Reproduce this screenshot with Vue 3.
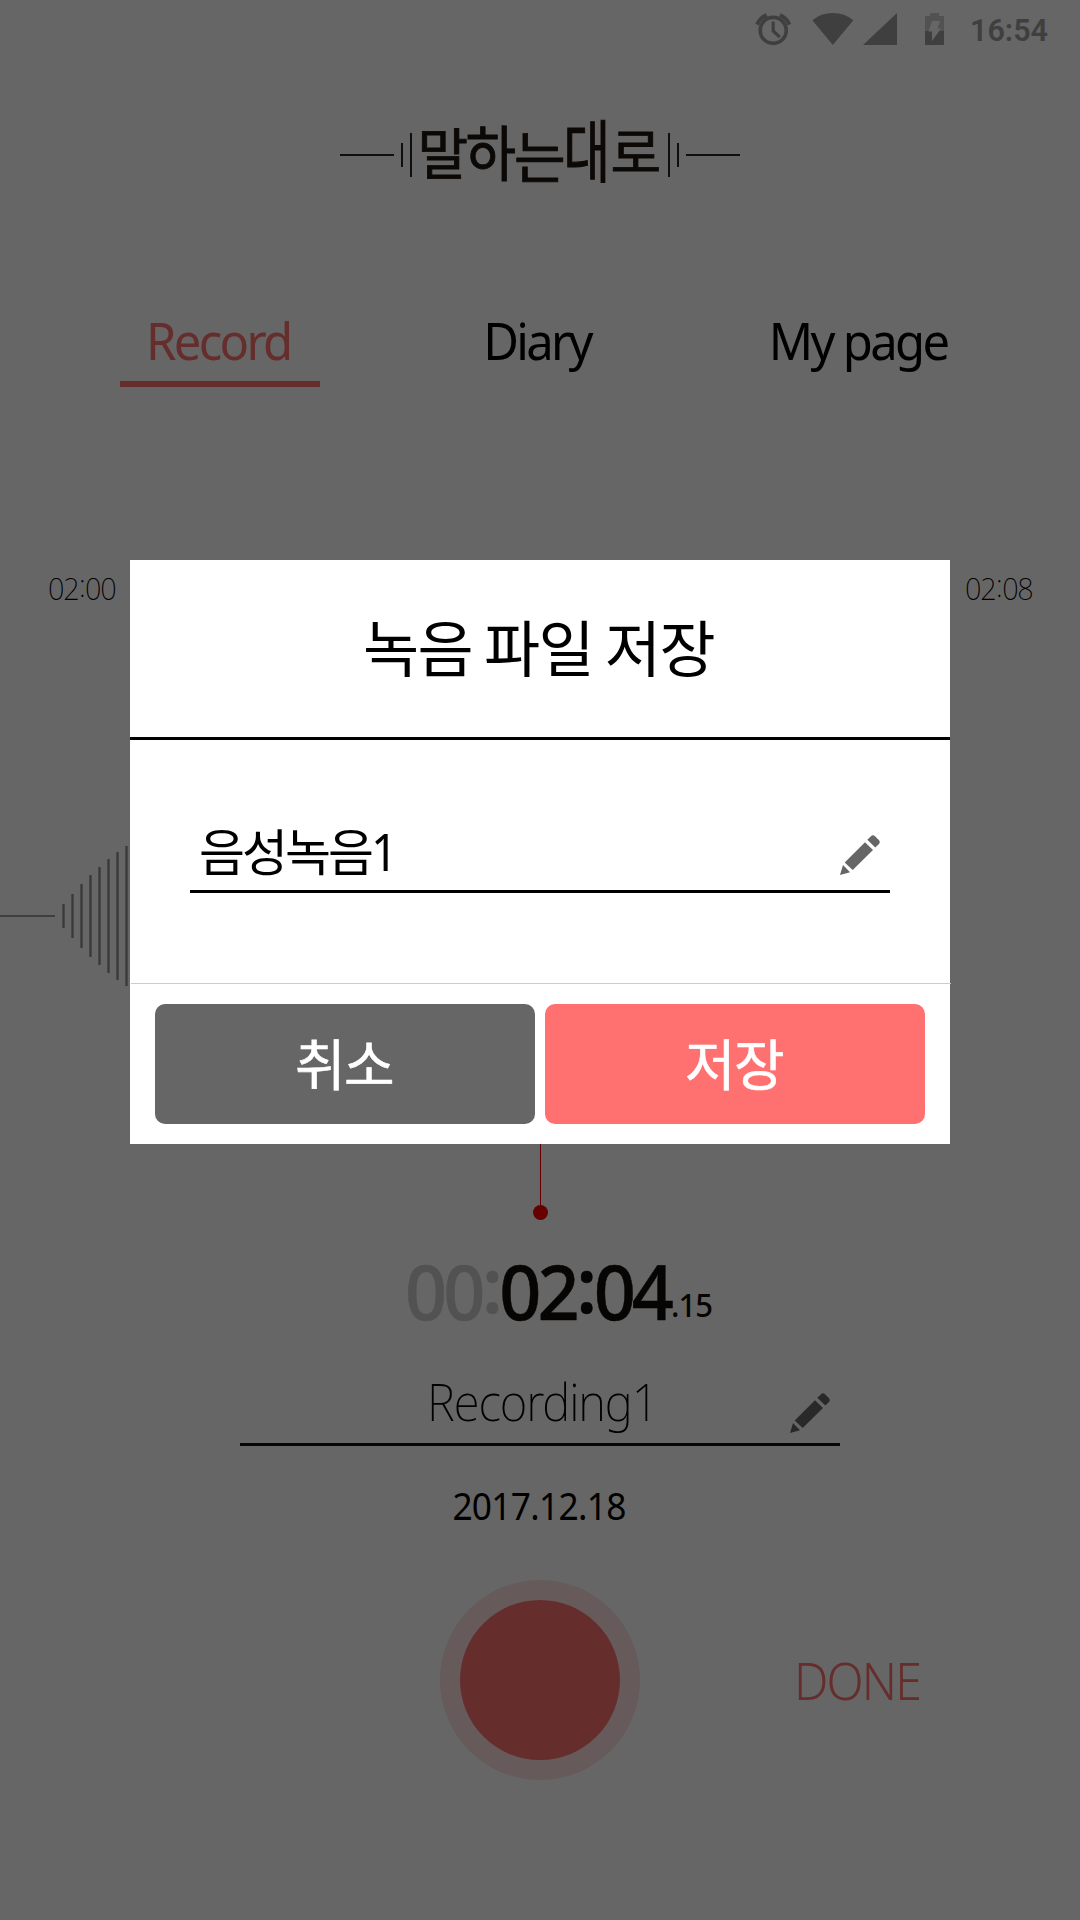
<script setup>
const tabs = [
  { label: 'Record', cls: 'record', active: true },
  { label: 'Diary', cls: 'diary', active: false },
  { label: 'My page', cls: 'mypage', active: false },
]
const bars = [24, 44, 64, 82, 98, 114, 128, 140]
const brand = [
  { ch: '말', cls: 'g1' },
  { ch: '하', cls: 'g2' },
  { ch: '는', cls: 'g3' },
  { ch: '대', cls: 'g4' },
  { ch: '로', cls: 'g5' },
]
</script>

<template>
  <div class="screen">
    <main class="page">
      <header class="status">
        <svg class="icons" width="200" height="60" viewBox="750 0 200 60">
          <g fill="none" stroke="#9e9e9e">
            <circle cx="773.2" cy="30.4" r="13" stroke-width="3.6" />
            <path d="M773.2 21.500V31l6.600 6.200" stroke-width="3.2" />
            <path d="M757.2 24.600Q760 18 766.600 15M789.400 24.600Q786.600 18 780 15" stroke-width="4" />
          </g>
          <path d="M812.3 20.300Q821 13 832.800 13T853.300 20.300L832.800 45z" fill="#9e9e9e" />
          <path d="M897 13v32h-34z" fill="#9e9e9e" />
          <path d="M930 13h9v3h5v15h-19V16h5z" fill="#cdcdcd" />
          <path d="M925 31h19v14h-19z" fill="#9e9e9e" />
          <path d="M932 21h8l-2.500 7.500h3.500L932 41v-9.500h-3.500z" fill="#fff" />
        </svg>
        <span class="clock">16:54</span>
      </header>

      <div class="brand">
        <i class="dash"></i><i class="tick short"></i><i class="tick tall"></i>
        <h1><span v-for="g in brand" :key="g.ch" :class="g.cls">{{ g.ch }}</span></h1>
        <i class="tick tall"></i><i class="tick short"></i><i class="dash"></i>
      </div>

      <nav class="tabs">
        <a v-for="t in tabs" :key="t.label" :class="['tab', { active: t.active }]"><span :class="t.cls">{{ t.label }}</span></a>
      </nav>

      <div class="times"><span>02<em>:</em>00</span><span>02<em>:</em>08</span></div>

      <div class="wave">
        <i class="base"></i>
        <i v-for="h in bars" :key="h" class="bar" :style="{ height: h + 'px' }"></i>
      </div>

      <div class="playhead"><i class="stem"></i><i class="dot"></i></div>

      <div class="timer"><span class="dim">00<em>:</em></span><span class="now">02<em>:</em>04</span><span class="frac">.15</span></div>

      <div class="name">
        <span class="name-text">Recording1</span>
        <svg class="pencil" width="40" height="40" viewBox="0 0 40 40" fill="#666">
          <path d="M27.300 4.800 31 1.200Q33 -.6 35 1.200L38.800 5Q40.600 7 39 9L35.300 12.600zM25 7.200l8 7.800-20.300 20L4.700 27.500zM3 30l7 7.200L0 40z" />
        </svg>
      </div>
      <div class="date">2017.12.18</div>

      <div class="controls">
        <button class="rec"><i></i></button>
        <span class="done">DONE</span>
      </div>
    </main>

    <div class="overlay">
      <section class="modal">
        <h2><span>녹음 파일 저장</span></h2>
        <div class="body">
          <div class="field">
            <span class="value">음성녹음<b>1</b></span>
            <svg class="pencil" width="40" height="40" viewBox="0 0 40 40" fill="#666">
              <path d="M27.300 4.800 31 1.200Q33 -.6 35 1.200L38.800 5Q40.600 7 39 9L35.300 12.600zM25 7.200l8 7.800-20.300 20L4.700 27.500zM3 30l7 7.200L0 40z" />
            </svg>
          </div>
        </div>
        <footer>
          <button class="btn cancel">취소</button>
          <button class="btn save">저장</button>
        </footer>
      </section>
    </div>
  </div>
</template>

<style>
body { margin: 0; background: #666; }
</style>

<style scoped>
* { box-sizing: border-box; }
i { display: block; flex: none; }
em { position: relative; font-style: normal; }
button { border: 0; padding: 0; font: inherit; }
.screen {
  position: relative;
  width: 1080px;
  height: 1920px;
  overflow: hidden;
  background: #fff;
  color: #000;
  font-family: "Noto Sans", "Noto Sans CJK KR", sans-serif;
}
.page { display: flex; flex-direction: column; height: 1920px; }
.status { display: flex; justify-content: flex-end; height: 60px; padding-right: 32px; }
.icons { margin-right: 20px; flex: none; }
.clock {
  width: 78px;
  font: 600 30.500px/61px Roboto, sans-serif;
  color: #9e9e9e;
  white-space: nowrap;
}
.brand {
  display: flex;
  align-items: center;
  justify-content: center;
  height: 70px;
  margin-top: 60px;
  color: #1c140e;
}
.dash { width: 54px; height: 2px; background: #2c2424; }
.tick { width: 2px; background: #2c2424; }
.short { height: 24px; }
.tall { height: 44px; }
.dash + .short { margin-left: 7px; }
.short + .tall { margin-left: 7px; }
.tall + .short { margin-left: 7px; }
.short + .dash { margin-left: 7px; }
h1 {
  display: flex;
  width: 256px;
  margin: 0;
  padding-left: 7px;
  font-size: 54px;
  line-height: 70px;
  font-weight: 400;
  -webkit-text-stroke: .8px #1c140e;
}
h1 span { display: block; width: 48px; flex: none; transform-origin: 50% 50%; }
.g1 { transform: translate(-1px, -2px) scale(1.02, 1.02); }
.g2 { transform: translate(-1px, -3px) scale(1.02, 1.12); }
.g3 { transform: translate(0, 1px) scale(1.04, 1.04); }
.g4 { transform: translate(-1px, -4px) scale(.94, 1.26); }
.g5 { transform: translate(0, -3px) scale(1.02, .98); }
.tabs { display: flex; justify-content: space-between; padding: 0 120px; margin-top: 120px; }
.tab {
  width: 200px;
  height: 77px;
  display: flex;
  justify-content: center;
  font-size: 51px;
  line-height: 60px;
  letter-spacing: -2.800px;
  white-space: nowrap;
}
.tab span { transform: translateX(-2px) scaleX(.96); }
.tab .diary { transform: translateX(-3px) scaleX(.96); }
.tab.active { color: #ff7070; border-bottom: 6px solid #ff7070; }
.times {
  display: flex;
  justify-content: space-between;
  height: 40px;
  margin-top: 181px;
  padding: 0 48px;
  font-size: 31px;
  font-weight: 200;
  line-height: 41px;
  letter-spacing: -1.400px;
}
.times span { transform: scaleX(.93); transform-origin: 0 50%; }
.times span:last-child { transform-origin: 100% 50%; }
.times em { top: -3px; padding: 0 .8px; }
.wave { display: flex; align-items: center; height: 140px; margin-top: 238px; }
.base { width: 55px; height: 2px; background: #9e9e9e; }
.bar { width: 3px; margin-left: 6px; background: linear-gradient(90deg, #b4b4b4 1px, #909090 1px, #909090 2px, #b4b4b4 2px); }
.base + .bar { margin-left: 7px; }
.playhead { display: flex; flex-direction: column; align-items: center; margin-top: 119px; padding-left: 1px; }
.stem { width: 1px; height: 100px; background: #f00; }
.dot { width: 15px; height: 15px; border-radius: 50%; background: #f00; }
.timer {
  display: flex;
  width: 400px;
  height: 80px;
  margin: 30px 0 0 405px;
  font-size: 76px;
  font-weight: 500;
  line-height: 81px;
  letter-spacing: -4.100px;
  color: #0f0d0b;
  -webkit-text-stroke: .5px;
  transform: scaleX(.97);
  transform-origin: 0 50%;
}
.timer em { top: -7px; padding: 0 .8px; font-weight: 600; }
.dim { color: #cdcdcd; }
.frac { font-size: 32px; line-height: 109px; letter-spacing: -1px; -webkit-text-stroke: 0; padding-left: 1px; }
.name {
  display: flex;
  width: 600px;
  height: 76px;
  margin: 40px 0 0 240px;
  border-bottom: 3px solid #0d0d0d;
}
.name-text { width: 362px; margin: 0 1px 0 187px; font-size: 51px; font-weight: 200; line-height: 63px; letter-spacing: -1.200px; transform: scaleX(.93); transform-origin: 0 50%; }
.name .pencil { margin-top: 23px; }
.date { margin-top: 34px; text-align: center; font-size: 38px; line-height: 50px; letter-spacing: -.8px; transform: translateX(-1px) scaleX(.93); }
.controls { display: flex; align-items: center; height: 200px; margin-top: 50px; padding-left: 440px; }
.rec { display: flex; align-items: center; justify-content: center; width: 200px; height: 200px; border-radius: 50%; background: #ffe1e1; }
.rec i { width: 160px; height: 160px; border-radius: 50%; background: #ff7070; }
.done { margin-left: 154px; color: #ff7070; font-size: 52px; font-weight: 300; line-height: 60px; letter-spacing: -2px; transform: scaleX(.93); transform-origin: 0 50%; }

.overlay { position: absolute; inset: 0; padding: 560px 130px 0; background: rgba(0, 0, 0, .6); }
.modal { height: 584px; background: #fff; }
h2 {
  height: 180px;
  margin: 0;
  padding-left: 233px;
  border-bottom: 3px solid #000;
  font-size: 61px;
  font-weight: 400;
  line-height: 178px;
  letter-spacing: -1.700px;
  word-spacing: -2px;
  white-space: nowrap;
}
.body { height: 243px; padding: 80px 60px 0; }
.field { display: flex; justify-content: space-between; height: 73px; padding: 0 10px 0 9px; border-bottom: 3px solid #000; }
.value { font-size: 50px; line-height: 63px; letter-spacing: -3px; }
.value b { display: inline-block; font-size: 51px; font-weight: 400; transform: scaleX(.92); transform-origin: 0 50%; }
.field .pencil { margin-top: 15px; }
footer { display: flex; gap: 10px; width: 820px; height: 161px; margin-left: 1px; border-top: 1px solid #ccc; padding: 20px 24px; }
.btn { width: 380px; height: 120px; padding-right: 2px; border-radius: 10px; color: #fff; font-size: 55px; -webkit-text-stroke: .6px #fff; line-height: 118px; letter-spacing: -1.500px; }
.cancel { background: #666; }
.save { background: #ff7070; }
</style>
